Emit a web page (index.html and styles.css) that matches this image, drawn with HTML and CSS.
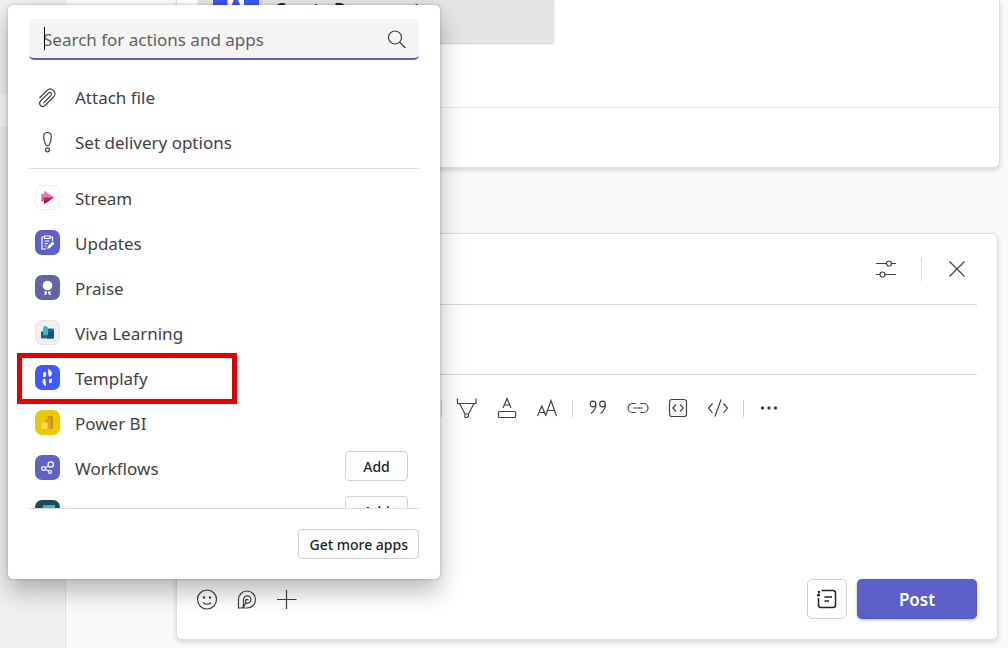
FILE: index.html
```html
<!DOCTYPE html>
<html lang="en">
<head>
    <meta charset="UTF-8">
    <meta name="viewport" content="width=device-width, initial-scale=1.0">
    <title>New post</title>
    <link rel="stylesheet" href="styles.css">
</head>
<body>
    <div class="page">
        <nav class="rail">
            <div class="rail-selected"></div>
        </nav>
        <main class="channel">
            <section class="thread">
                <div class="attachment">
                    <svg class="attachment-logo" viewBox="0 0 46 46">
                        <rect width="46" height="46" fill="#3b55f5"/>
                        <path d="M14.500 14H31v16H14.500z" fill="#fff"/>
                        <path d="M21 22h3.500l3.500 8H18z" fill="#3b55f5"/>
                    </svg>
                    <span class="attachment-title">Create Document</span>
                </div>
                <div class="reply"></div>
            </section>

            <section class="composer">
                <header class="composer-header">
                    <button type="button" class="icon-button" aria-label="Post settings">
                        <svg viewBox="0 0 24 24">
                            <path d="M2 6.500h10.500M17.500 6.500H22M2 17.500h4M11 17.500h11"/>
                            <circle cx="15" cy="6.500" r="2.500"/>
                            <circle cx="8.500" cy="17.500" r="2.500"/>
                        </svg>
                    </button>
                    <span class="separator"></span>
                    <button type="button" class="icon-button" aria-label="Close">
                        <svg viewBox="0 0 24 24"><path d="M4.500 4.500l15 15M19.500 4.500l-15 15"/></svg>
                    </button>
                </header>
                <div class="subject"></div>
                <div class="toolbar">
                    <span class="toolbar-separator"></span>
                    <button type="button" class="icon-button" aria-label="Highlight">
                        <svg viewBox="0 0 24 24"><path d="M2.500 2.500v5h18.500v-5M4.500 7.500L10 18h3.500L19 7.500M10 18v3.500h2l1.500-1V18"/></svg>
                    </button>
                    <button type="button" class="icon-button" aria-label="Font colour">
                        <svg viewBox="0 0 24 24"><path d="M8 12l4-9.500L16 12M9.500 9h5"/><rect x="3.500" y="15.500" width="17" height="6" rx="1"/></svg>
                    </button>
                    <button type="button" class="icon-button" aria-label="Font size">
                        <svg viewBox="0 0 24 24"><path d="M2.500 20l4.300-10L11 20M4 16.500h5.500M10.500 20L16 4.500 21.500 20M12.500 14.500h7"/></svg>
                    </button>
                    <span class="toolbar-separator"></span>
                    <button type="button" class="icon-button" aria-label="Quote">
                        <svg viewBox="0 0 24 24"><circle cx="7" cy="8" r="2.800"/><circle cx="16.500" cy="8" r="2.800"/><path d="M9.800 8c.3 4-1.500 7-4.800 9.500M19.300 8c.3 4-1.500 7-4.800 9.500"/></svg>
                    </button>
                    <button type="button" class="icon-button" aria-label="Link">
                        <svg viewBox="0 0 24 24"><path d="M9.500 7.500H6.500a4.500 4.500 0 000 9h3M14.500 7.500h3a4.500 4.500 0 010 9h-3M7 12h10"/></svg>
                    </button>
                    <button type="button" class="icon-button" aria-label="Inline code">
                        <svg viewBox="0 0 24 24"><rect x="3.500" y="3.500" width="17" height="17" rx="2.500"/><path d="M10 8.500L6.800 12l3.200 3.500M14 8.500l3.200 3.500-3.200 3.500"/></svg>
                    </button>
                    <button type="button" class="icon-button" aria-label="Code block">
                        <svg viewBox="0 0 24 24"><path d="M6.500 7.500L2.500 12l4 5M17.500 7.500l4 4.500-4 5M15 3.500L9 20.500"/></svg>
                    </button>
                    <span class="toolbar-separator"></span>
                    <button type="button" class="icon-button" aria-label="More">
                        <svg viewBox="0 0 24 24"><g class="solid"><circle cx="5.500" cy="12" r="1.700"/><circle cx="12" cy="12" r="1.700"/><circle cx="18.500" cy="12" r="1.700"/></g></svg>
                    </button>
                </div>
                <div class="message"></div>
                <footer class="composer-footer">
                    <button type="button" class="icon-button" aria-label="Emoji">
                        <svg viewBox="0 0 24 24"><circle cx="12" cy="12.500" r="9.500"/><path d="M8 15.500c2 2.300 6 2.300 8 0"/><g class="solid"><circle cx="9" cy="10.500" r="1.200"/><circle cx="15" cy="10.500" r="1.200"/></g></svg>
                    </button>
                    <button type="button" class="icon-button" aria-label="Loop component">
                        <svg viewBox="0 0 24 24"><path d="M3.500 21v-8.500a8.500 8.500 0 118.500 8.500zM3.500 21h2.500c1.500 0 2.500-1 2.500-2.500v-6a3.700 3.700 0 113.700 3.700c-1.500-.3-2-1.500-1.500-3 .4-1.200 2.200-1.200 2.500.2M12 16.200c-1.500 0-2.200.8-2.500 2-.3 1.500-1.200 2.800-3.200 2.800"/></svg>
                    </button>
                    <button type="button" class="icon-button" aria-label="Actions and apps">
                        <svg viewBox="0 0 24 24"><path d="M11.500 3v19M2 12.500h19.500"/></svg>
                    </button>
                    <button type="button" class="post-options" aria-label="Post type">
                        <svg viewBox="0 0 24 24"><path d="M6.500 3.500H18A2.500 2.500 0 0120.500 6v12a2.500 2.500 0 01-2.500 2.500H6A2.500 2.500 0 013.500 18v-7M9.500 10H17M9.500 14H14"/><circle cx="3.500" cy="8" r=".8"/><circle cx="4" cy="5" r=".5"/></svg>
                    </button>
                    <button type="button" class="post-button">Post</button>
                </footer>
            </section>
        </main>
    </div>

    <div class="popup">
        <div class="search">
            <input type="text" id="appSearch" placeholder="Search for actions and apps" aria-label="Search for actions and apps">
            <span class="caret"></span>
            <svg class="search-icon" viewBox="0 0 24 24"><circle cx="10" cy="10.500" r="6.500"/><path d="M14.500 15l6 6"/></svg>
        </div>

        <div class="actions">
            <button type="button" class="item">
                <svg class="item-icon" viewBox="0 0 24 24"><path d="M4.500 12L12 4.500c2-2 4.500-2 6.500 0s2 4.500 0 6.500L10 19.500c-1.500 1.300-3.200 1.300-4.500 0s-1.300-3 0-4.500L13.500 7c.8-.8 1.800-.8 2.500 0s.7 1.700 0 2.500L8.500 17"/></svg>
                Attach file
            </button>
            <button type="button" class="item">
                <svg class="item-icon" viewBox="0 0 24 24"><path d="M12.500 1.500c-2.700 0-4 1.700-3.800 4.500.2 3 1 5.700 1.800 7.500.8 1.500 3.200 1.500 4 0 .8-1.800 1.600-4.500 1.800-7.500.2-2.800-1.100-4.500-3.800-4.500z"/><circle cx="12.500" cy="18.800" r="2"/></svg>
                Set delivery options
            </button>
        </div>

        <ul class="apps">
            <li class="app">
                <button type="button" class="item">
                    <svg class="app-icon" viewBox="0 0 25 25">
                        <rect x=".5" y=".5" width="24" height="24" rx="7" fill="#fff" stroke="#f1f1f1"/>
                        <path d="M6.500 9.500h3v7h-3z" fill="#d8579a"/>
                        <path d="M9 6l10 6.500-10 6.500z" fill="#b5266f"/>
                        <path d="M9 6l10 6.500H6.500V9H9z" fill="#e878ad"/>
                        <path d="M9 16.500l8-2.800L9 19z" fill="#8c1250"/>
                    </svg>
                    Stream
                </button>
            </li>
            <li class="app">
                <button type="button" class="item">
                    <svg class="app-icon" viewBox="0 0 25 25">
                        <rect width="25" height="25" rx="7" fill="#5b5fc7"/>
                        <path d="M9.500 7H7v12h4M15 7h2.500v4M9.500 6h5.500v2.500H9.500zM9.500 11h5M9.500 13.500h3.500M9.500 16h2" fill="none" stroke="#fff"/>
                        <path d="M12 19l1-3 4.500-4.500 2 2L15 18z" fill="#fff"/>
                    </svg>
                    Updates
                </button>
            </li>
            <li class="app">
                <button type="button" class="item">
                    <svg class="app-icon" viewBox="0 0 25 25">
                        <rect width="25" height="25" rx="7" fill="#6264a7"/>
                        <circle cx="12.500" cy="10.500" r="4.800" fill="#fff"/>
                        <path d="M9.500 16c2 .8 4 .8 6 0v4.500l-3-2-3 2z" fill="#fff"/>
                        <path d="M12.500 16v3" stroke="#6264a7"/>
                    </svg>
                    Praise
                </button>
            </li>
            <li class="app">
                <button type="button" class="item">
                    <svg class="app-icon" viewBox="0 0 25 25">
                        <rect x=".5" y=".5" width="24" height="24" rx="7" fill="#f0f0f0" stroke="#e4e4e4"/>
                        <rect x="10" y="8.500" width="9" height="10" rx="1.500" fill="#1b6b88"/>
                        <path d="M12 12h7v5a1.500 1.500 0 01-1.500 1.500H12z" fill="#14536f"/>
                        <path d="M6 11.500h4v7H7.500A1.500 1.500 0 016 17z" fill="#126070"/>
                        <path d="M8 8c0-1.500 1.500-2 2.500-2S13 7 13 8v6.500c0 1.200-5 1.200-5 0z" fill="#3fb4cf"/>
                    </svg>
                    Viva Learning
                </button>
            </li>
            <li class="app">
                <button type="button" class="item">
                    <svg class="app-icon" viewBox="0 0 25 25">
                        <rect width="25" height="25" rx="7" fill="#3f59fb"/>
                        <path d="M8 7.500c1.500 0 2.500-.3 3-1V11c-.5 1-1 1-3 1zM13 3.500c2 1.500 3.800 3 4 5 0 1.500-1 2.500-2.500 3.500-1-1-1.500-3-1.500-8.500zM11 21.500c-2-1.500-3.500-3-3.500-5 0-1.500 1-2.500 2-3.200 1 1 1.500 3 1.500 8.200zM14 14.500c.5-1 1.500-1 3-1v4c-1.500.3-2.500.3-3 1z" fill="#fff"/>
                    </svg>
                    Templafy
                </button>
            </li>
            <li class="app">
                <button type="button" class="item">
                    <svg class="app-icon" viewBox="0 0 25 25">
                        <rect width="25" height="25" rx="7" fill="#f0c800"/>
                        <rect x="12.500" y="6" width="5.500" height="13" rx="1" fill="#c8930c"/>
                        <rect x="10" y="9" width="5.500" height="10" rx="1" fill="#dfa91d"/>
                        <rect x="7" y="12.500" width="5.500" height="6.500" rx="1" fill="#f7dc62"/>
                    </svg>
                    Power BI
                </button>
            </li>
            <li class="app">
                <button type="button" class="item">
                    <svg class="app-icon" viewBox="0 0 25 25">
                        <rect width="25" height="25" rx="7" fill="#5f62c9"/>
                        <g fill="none" stroke="#fff" stroke-width="1.200">
                            <circle cx="15.700" cy="9.500" r="2.700"/>
                            <circle cx="8.500" cy="13.500" r="1.900"/>
                            <circle cx="15" cy="17" r="1.500"/>
                            <path d="M10.300 12.700l3-1.800M10.300 14.300l3.400 2"/>
                        </g>
                    </svg>
                    Workflows
                </button>
                <button type="button" class="outline-button">Add</button>
            </li>
            <li class="app">
                <button type="button" class="item" aria-label="More app">
                    <svg class="app-icon" viewBox="0 0 25 25">
                        <rect width="25" height="25" rx="7" fill="#1b4b5a"/>
                        <rect x="8" y="5" width="12" height="14" fill="#37b5c4"/>
                    </svg>
                </button>
                <button type="button" class="outline-button">Add</button>
            </li>
        </ul>

        <div class="popup-footer">
            <button type="button" class="outline-button">Get more apps</button>
        </div>
        <div class="highlight"></div>
    </div>
</body>
</html>
```
FILE: styles.css
```css
* {
    box-sizing: border-box;
}

body {
    margin: 0;
    font-family: "Noto Sans", "Open Sans", sans-serif;
    color: #424242;
    background-color: #fafafa;
}

button,
input {
    font-family: inherit;
    color: inherit;
}

svg {
    display: block;
    flex-shrink: 0;
    fill: none;
    stroke: #424242;
    stroke-width: 1.2;
}

.solid {
    fill: #424242;
    stroke: none;
}

.page {
    display: flex;
    min-height: 100vh;
    overflow: hidden;
}

.rail {
    width: 66px;
    padding-top: 94px;
    background-color: #f0f0f0;
    border-right: 1px solid #e0e0e0;
}

.rail-selected {
    height: 33px;
    background-color: #fafafa;
}

.channel {
    flex: 1;
    display: flex;
    flex-direction: column;
    gap: 65px;
    padding: 0 10px 8px 110px;
}

.thread,
.composer {
    background-color: #fff;
    border: 1px solid #e0e0e0;
    border-radius: 6px;
    box-shadow: 0 2px 5px rgba(0, 0, 0, 0.16);
}

.thread {
    margin-right: -2px;
    border-top: none;
    border-radius: 0 0 6px 6px;
}

.attachment {
    display: flex;
    align-items: flex-end;
    gap: 16px;
    width: 356px;
    height: 43px;
    margin: 0 0 64px 21px;
    padding: 0 15px 20px;
    background-color: #e4e4e4;
    border-radius: 0 0 4px 4px;
    box-shadow: 0 1px 2px rgba(0, 0, 0, 0.2);
}

.attachment-logo {
    width: 46px;
    height: 46px;
    stroke: none;
}

.attachment-title {
    font-size: 17px;
    line-height: 26px;
    font-weight: 600;
    color: #242424;
}

.reply {
    height: 60px;
    border-top: 1px solid #ebebeb;
}

.composer {
    flex: 1;
    display: flex;
    flex-direction: column;
    padding: 0 20px 20px;
}

.composer-header {
    display: flex;
    align-items: center;
    justify-content: flex-end;
    gap: 23px;
    height: 71px;
    border-bottom: 1px solid #d9d9d9;
}

.composer-header .icon-button:last-child {
    margin: 0 8px 0 0;
}

.separator {
    width: 1px;
    height: 23px;
    background-color: #d9d9d9;
}

.icon-button {
    display: flex;
    padding: 0;
    border: none;
    background: none;
}

.icon-button svg,
.post-options svg {
    width: 24px;
    height: 24px;
}

.subject {
    height: 70px;
    border-bottom: 1px solid #d9d9d9;
}

.toolbar {
    display: flex;
    align-items: center;
    gap: 16px;
    height: 66px;
    padding-left: 247px;
}

.toolbar-separator {
    width: 1px;
    height: 17px;
    margin: 0 -3px;
    background-color: #d1d1d1;
}

.message {
    flex: 1;
}

.composer-footer {
    display: flex;
    align-items: center;
    gap: 16px;
}

.composer-footer .icon-button:first-child {
    margin-left: -2px;
}

.post-options {
    display: flex;
    align-items: center;
    justify-content: center;
    width: 40px;
    height: 40px;
    margin-left: auto;
    margin-right: -6px;
    padding: 0;
    background-color: #fff;
    border: 1px solid #d1d1d1;
    border-radius: 5px;
}

.post-options svg {
    stroke: #242424;
    stroke-width: 1.5;
}

.post-button {
    width: 120px;
    height: 40px;
    border: none;
    border-radius: 5px;
    background-color: #5b5fc7;
    box-shadow: 0 1px 3px rgba(0, 0, 0, 0.3);
    color: #fff;
    font-size: 17px;
    font-weight: 600;
}

.popup {
    position: absolute;
    top: 5px;
    left: 8px;
    width: 432px;
    padding: 14px 21px 20px;
    background-color: #fff;
    border-radius: 5px;
    box-shadow: 0 12px 24px rgba(0, 0, 0, 0.28), 0 0 3px rgba(0, 0, 0, 0.25);
}

.search {
    position: relative;
    display: flex;
    align-items: center;
    height: 41px;
    padding: 0 10px 0 14px;
    background-color: #f4f4f4;
    border-bottom: 2px solid #5b5fc7;
    border-radius: 5px;
}

.search input {
    flex: 1;
    min-width: 0;
    padding: 2px 0 0;
    border: none;
    outline: none;
    background: none;
    font-size: 17px;
}

.search input::placeholder {
    color: #616161;
    opacity: 1;
}

.caret {
    position: absolute;
    top: 8px;
    left: 15px;
    width: 1px;
    height: 23px;
    background-color: #000;
}

.search-icon {
    width: 24px;
    height: 24px;
}

.actions {
    padding: 15px 0 3px;
    border-bottom: 1px solid #dedede;
}

.item {
    display: flex;
    align-items: center;
    gap: 16px;
    height: 45px;
    padding: 0 0 0 6px;
    border: none;
    background: none;
    font-size: 17px;
}

.item-icon {
    width: 24px;
    height: 24px;
}

.app-icon {
    width: 25px;
    height: 25px;
    margin: 0 -1px 2px 0;
    stroke: none;
}

.apps {
    height: 340px;
    margin: 0;
    padding: 7px 0 0;
    overflow: hidden;
    list-style: none;
    border-bottom: 1px solid #dedede;
}

.app {
    display: flex;
    align-items: center;
    justify-content: space-between;
    height: 45px;
    padding-right: 11px;
}

.outline-button {
    height: 30px;
    padding: 0 10px;
    background-color: #fff;
    border: 1px solid #d1d1d1;
    border-radius: 4px;
    color: #242424;
    font-size: 14px;
    font-weight: 500;
}

.app .outline-button {
    width: 63px;
    margin-bottom: 5px;
}

.popup-footer {
    display: flex;
    justify-content: flex-end;
    padding-top: 20px;
}

/* red frame over the Templafy row */
.highlight {
    position: absolute;
    top: 348px;
    left: 9px;
    width: 220px;
    height: 51px;
    border: 5px solid #e60000;
    pointer-events: none;
}
```
